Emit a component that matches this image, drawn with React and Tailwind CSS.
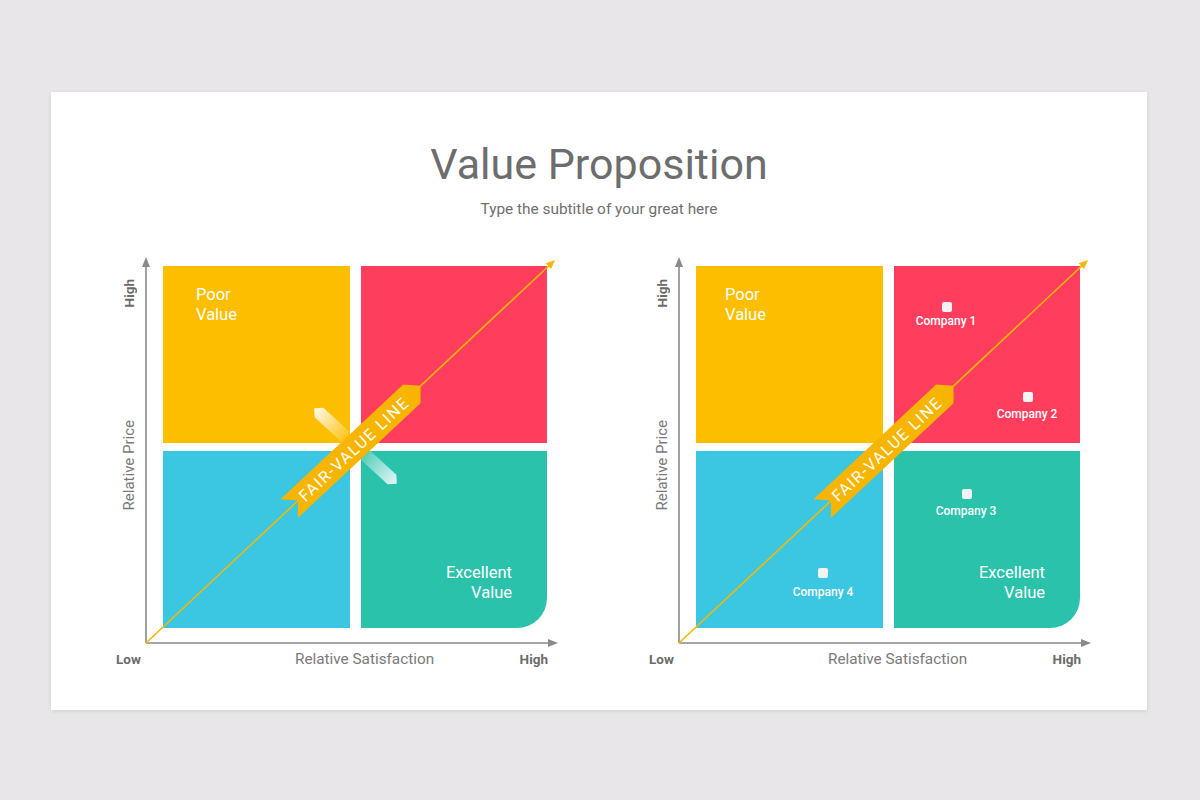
import React from "react";

const font = { fontFamily: "Roboto, 'Noto Sans', Arial, sans-serif" };

function Overlay({ band }) {
  return (
    <svg
      className="absolute left-0 top-0 overflow-visible pointer-events-none"
      width="414"
      height="387"
      viewBox="0 0 414 387"
    >
      <defs>
        <linearGradient id="bandGrad" gradientUnits="userSpaceOnUse" x1="-56" y1="0" x2="56" y2="0">
          <stop offset="0" stopColor="#ffffff" stopOpacity="0.92" />
          <stop offset="0.42" stopColor="#ffffff" stopOpacity="0.05" />
          <stop offset="0.55" stopColor="#ffffff" stopOpacity="0.1" />
          <stop offset="1" stopColor="#ffffff" stopOpacity="0.88" />
        </linearGradient>
      </defs>
      {/* axes */}
      <line x1="0" y1="386" x2="0" y2="8" stroke="#8a8a8a" strokeWidth="1.6" />
      <polygon points="0,0 -4,10 4,10" fill="#8a8a8a" />
      <line x1="0" y1="386" x2="404" y2="386" stroke="#8a8a8a" strokeWidth="1.6" />
      <polygon points="412,386 402,382 402,390" fill="#8a8a8a" />
      {/* diagonal */}
      <line x1="0" y1="386" x2="403.2" y2="8.5" stroke="#f8b700" strokeWidth="1.6" />
      <polygon points="409,3 405.1,12.07 399.7,6.23" fill="#f8b700" />
      {band && (
        <g transform="translate(209.5,189) rotate(42.5)">
          <polygon
            points="-56,0 -49.5,-6.5 49.5,-6.5 56,0 49.5,6.5 -49.5,6.5"
            fill="url(#bandGrad)"
          />
        </g>
      )}
      <g transform="translate(204.5,194.25) rotate(-43.1)">
        <polygon
          points="-84,-12.75 84,-12.75 96,0 84,12.75 -84,12.75 -72,0"
          fill="#f7b500"
        />
        <text
          x="4"
          y="1"
          textAnchor="middle"
          dominantBaseline="central"
          fill="#ffffff"
          fontSize="16"
          letterSpacing="1.5"
          style={font}
        >
          FAIR-VALUE LINE
        </text>
      </g>
    </svg>
  );
}

function Marker({ x, y, lx, ly, label }) {
  return (
    <>
      <div
        className="absolute w-[10px] h-[10px] rounded-[2px] bg-[#f3f3f3]"
        style={{ left: x - 5, top: y - 5 }}
      />
      <div
        className="absolute -translate-x-1/2 -translate-y-1/2 whitespace-nowrap text-[12px] leading-[14px] font-medium text-white"
        style={{ left: lx, top: ly }}
      >
        {label}
      </div>
    </>
  );
}

function Chart({ band, companies, poorPad }) {
  return (
    <div className="flex flex-col w-[444px]" style={font}>
      <div className="flex">
        <div className="w-[26px] mr-[4px] flex flex-col items-center pt-[22px]">
          <span className="[writing-mode:vertical-rl] rotate-180 text-[13.5px] leading-[16px] font-bold text-[#6b6b6b]">
            High
          </span>
          <span className="mt-[113px] [writing-mode:vertical-rl] rotate-180 text-[15px] leading-[18px] text-[#7a7a7a] whitespace-nowrap">
            Relative Price
          </span>
        </div>
        <div className="relative w-[414px] h-[387px] pl-[17px] pt-[9px]">
          <div className="grid grid-cols-[187px_186px] grid-rows-[177px_177px] gap-x-[11px] gap-y-[8px]">
            <div
              className="bg-[#fdbe00] pt-[19px] text-white text-[16.5px] leading-[20px]"
              style={{ paddingLeft: poorPad }}
            >
              <div>Poor</div>
              <div>Value</div>
            </div>
            <div className="relative bg-[#ff3d5d]">
              {companies && (
                <>
                  <Marker x={53} y={41} lx={52} ly={55} label="Company 1" />
                  <Marker x={134} y={131} lx={133} ly={148} label="Company 2" />
                </>
              )}
            </div>
            <div className="relative bg-[#3bc6e2]">
              {companies && <Marker x={127} y={122} lx={127} ly={141} label="Company 4" />}
            </div>
            <div className="relative bg-[#2bc2ab] rounded-br-[30px] flex flex-col justify-end items-end pr-[35px] pb-[25px] text-white text-[16.5px] leading-[20px] text-right">
              {companies && <Marker x={73} y={43} lx={72} ly={60} label="Company 3" />}
              <div>Excellent</div>
              <div>Value</div>
            </div>
          </div>
          <Overlay band={band} />
        </div>
      </div>
      <div className="flex items-center h-[20px] mt-[5px] pr-[12px]">
        <span className="w-[26px] text-[13.5px] leading-[16px] font-bold text-[#6b6b6b]">Low</span>
        <span className="ml-[153px] text-[15.3px] leading-[18px] text-[#7a7a7a] whitespace-nowrap">
          Relative Satisfaction
        </span>
        <span className="ml-auto text-[13.5px] leading-[16px] font-bold text-[#6b6b6b]">High</span>
      </div>
    </div>
  );
}

export default function App() {
  return (
    <div className="w-[1200px] h-[800px] bg-[#e8e6e8] pt-[92px] pl-[51px]" style={font}>
      <div className="w-[1096px] h-[618px] bg-white shadow-[0_1px_4px_rgba(0,0,0,0.10)]">
        <div className="flex flex-col items-center">
          <h1 className="mt-[46px] text-[43px] leading-[52px] text-[#6d6d6d] font-normal">
            Value Proposition
          </h1>
          <p className="mt-[9px] text-[15.4px] leading-[20px] text-[#6f6f6f]">
            Type the subtitle of your great here
          </p>
        </div>
        <div className="flex pl-[65px] gap-[89px] mt-[38px]">
          <Chart band poorPad={33} />
          <Chart companies poorPad={29} />
        </div>
      </div>
    </div>
  );
}
